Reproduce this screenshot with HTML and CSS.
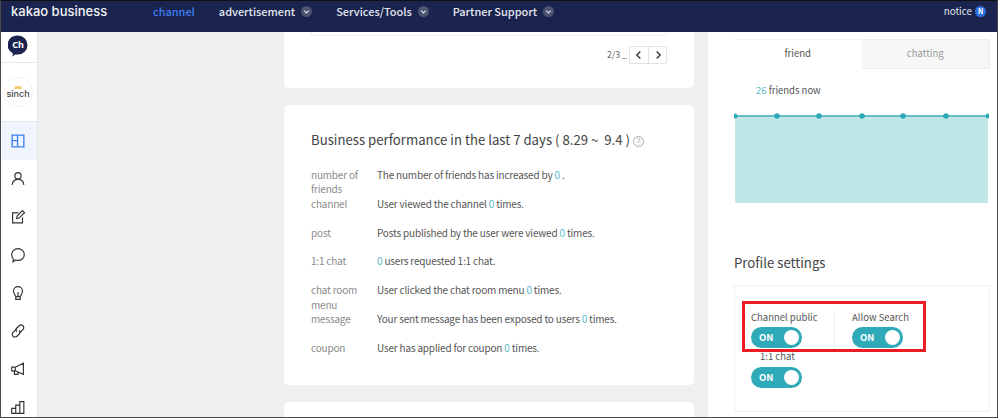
FILE: index.html
```html
<!DOCTYPE html>
<html lang="en">
<head>
<meta charset="utf-8">
<title>kakao business</title>
<link rel="stylesheet" href="styles.css">
</head>
<body>
<div class="frame">
  <header class="topbar">
    <div class="logo">kakao business</div>
    <nav class="nav">
      <span class="nav-item active">channel</span>
      <span class="nav-item">advertisement <i class="chev"><svg viewBox="0 0 12 12"><path d="M3.5 5l2.5 2.5L8.500 5"/></svg></i></span>
      <span class="nav-item">Services/Tools <i class="chev"><svg viewBox="0 0 12 12"><path d="M3.5 5l2.5 2.5L8.500 5"/></svg></i></span>
      <span class="nav-item">Partner Support <i class="chev"><svg viewBox="0 0 12 12"><path d="M3.5 5l2.5 2.5L8.500 5"/></svg></i></span>
    </nav>
    <div class="notice">notice <b class="badge">N</b></div>
  </header>
  <div class="body">
    <aside class="side">
      <div class="side-ch">
        <svg class="ch" viewBox="0 0 20 22"><path class="ch-b" d="M10 .5a9.500 9.500 0 0 1 0 19H7l-2.500 2.300.4-3.300A9.500 9.500 0 0 1 10 .5z"/><text x="10" y="13" class="ch-t">Ch</text></svg>
      </div>
      <div class="side-brand">
        <div class="brand-circle"><span class="brand-dot"></span><span class="brand-name">sinch</span></div>
      </div>
      <div class="menu active">
        <svg viewBox="0 0 20 20"><path d="M3.500 3.500h13v13h-13zM3.500 9.500h6M9.500 3.500v13"/></svg>
      </div>
      <div class="menu"><svg viewBox="0 0 20 20"><circle cx="10" cy="6.500" r="3.500"/><path d="M3.500 16.500c.5-4 3-6 6.500-6s6 2 6.500 6"/></svg></div>
      <div class="menu"><svg viewBox="0 0 20 20"><path d="M15 10.500v6H4V5.500h6.500"/><path d="M8.500 11.700l.5-2.700 6-6 2.200 2.200-6 6z"/></svg></div>
      <div class="menu"><svg viewBox="0 0 20 20"><path d="M10 3c4 0 7 2.800 7 6.500S14 16 10 16c-1 0-2-.2-2.800-.5L4.500 17.500l.3-3.200C3.700 13 3 11.400 3 9.500 3 5.800 6 3 10 3z"/></svg></div>
      <div class="menu"><svg viewBox="0 0 20 20"><path d="M7.500 14c0-1.500-2.500-2.500-2.500-6a5 5 0 0 1 10 0c0 3.500-2.500 4.500-2.500 6zM7.500 14v3h5v-3M10 9v5"/></svg></div>
      <div class="menu"><svg viewBox="0 0 20 20"><path d="M8.500 7.500l-4 4a3 3 0 0 0 4.300 4.300l2.500-2.500a3 3 0 0 0 0-4.300"/><path d="M11.500 12.500l4-4a3 3 0 0 0-4.300-4.300L8.700 6.700a3 3 0 0 0 0 4.300"/></svg></div>
      <div class="menu"><svg viewBox="0 0 20 20"><path d="M3 8h4l9-4.500v12.500l-9-4H3zM7 8v4M6 12v4h4v-2.700"/></svg></div>
      <div class="menu"><svg viewBox="0 0 20 20"><path d="M3 11.500h4.500v5.500H3zM7.500 8h4.500v9H7.500zM12 4h4.500v13H12z"/></svg></div>
    </aside>
    <main class="main">
      <div class="col-left">
        <section class="card card-top">
          <div class="slide-end"></div>
          <div class="pager">
            <span class="pager-count">2/3 _</span>
            <div class="pager-btns">
              <span class="pager-btn"><svg viewBox="0 0 18 18"><path d="M10.500 5L6.500 9l4 4"/></svg></span>
              <span class="pager-btn"><svg viewBox="0 0 18 18"><path d="M7.500 5l4 4-4 4"/></svg></span>
            </div>
          </div>
        </section>
        <section class="card card-perf">
          <h2 class="perf-title">Business performance in the last 7 days ( 8.29 ~&nbsp; 9.4 ) <i class="help">?</i></h2>
          <dl class="perf">
            <dt>number of friends</dt><dd>The number of friends has increased by <em>0</em> .</dd>
            <dt>channel</dt><dd>User viewed the channel <em>0</em> times.</dd>
            <dt>post</dt><dd>Posts published by the user were viewed <em>0</em> times.</dd>
            <dt>1:1 chat</dt><dd><em>0</em> users requested 1:1 chat.</dd>
            <dt>chat room menu</dt><dd>User clicked the chat room menu <em>0</em> times.</dd>
            <dt>message</dt><dd>Your sent message has been exposed to users <em>0</em> times.</dd>
            <dt>coupon</dt><dd>User has applied for coupon <em>0</em> times.</dd>
          </dl>
        </section>
        <section class="card card-next"></section>
      </div>
      <div class="col-right">
        <div class="stats">
          <div class="tabs">
            <span class="tab current">friend</span>
            <span class="tab">chatting</span>
          </div>
          <p class="friends"><em>26</em> friends now</p>
          <svg class="chart" viewBox="0 0 255 92" preserveAspectRatio="none">
            <rect class="area" x="1" y="6" width="253" height="86"/>
            <path class="line" d="M1 5H254"/>
            <circle cx="1" cy="5" r="2.500"/><circle cx="43" cy="5" r="2.800"/><circle cx="85" cy="5" r="2.800"/><circle cx="128" cy="5" r="2.800"/><circle cx="169" cy="5" r="2.800"/><circle cx="212" cy="5" r="2.800"/><circle cx="254" cy="5" r="2.500"/>
          </svg>
        </div>
        <h2 class="profile-title">Profile settings</h2>
        <div class="profile">
          <div class="setting-row">
            <div class="setting first">
              <div class="setting-label">Channel public</div>
              <div class="toggle"><span>ON</span><i></i></div>
            </div>
            <div class="setting second">
              <div class="setting-label">Allow Search</div>
              <div class="toggle"><span>ON</span><i></i></div>
            </div>
          </div>
          <div class="setting third">
            <div class="setting-label indent">1:1 chat</div>
            <div class="toggle"><span>ON</span><i></i></div>
          </div>
          <div class="highlight"></div>
        </div>
      </div>
    </main>
  </div>
</div>
</body>
</html>
```

FILE: styles.css
```css
* { box-sizing: border-box; }
html, body { margin: 0; height: 100%; }
body { font-family: "Noto Sans CJK KR", "Noto Sans", sans-serif; color: #555; background: #fff; overflow: hidden; }
.frame { width: 998px; height: 418px; display: flex; flex-direction: column; border: 1px solid #4a4a4a; border-top: 1px solid #111; overflow: hidden; }

.topbar { flex: 0 0 31px; background: #1a244f; color: #e4e6ee; display: flex; align-items: flex-start; padding: 0 11px 0 10px; }
.logo { width: 142px; font: 500 13px/20px "Inter", "Noto Sans", sans-serif; color: #f2f3f6; letter-spacing: 0; }
.nav { display: flex; flex: 1; font-size: 10.950px; line-height: 20px; font-weight: 500; }
.nav-item { margin-right: 24px; display: flex; align-items: center; gap: 6px; white-space: nowrap; }
.nav-item.active { color: #3f7ef0; margin-right: 24px; }
.chev { width: 11px; height: 11px; border-radius: 50%; background: #4d5470; display: block; }
.chev svg { display: block; width: 11px; height: 11px; fill: none; stroke: #e0e2ea; stroke-width: 1.200; }
.notice { font-size: 9.800px; line-height: 20px; display: flex; align-items: center; gap: 3px; }
.badge { width: 11px; height: 11px; border-radius: 50%; background: #2f6fe0; color: #fff; font-size: 7px; line-height: 11px; text-align: center; }

.body { flex: 1; display: flex; min-height: 0; }
.side { flex: 0 0 37px; background: #fff; border-right: 1px solid #e6e6e8; overflow: hidden; }
.side-ch { height: 31px; display: flex; justify-content: center; align-items: center; border-bottom: 1px solid #e9e9ec; padding: 0 2px 3px 0; }
.ch { width: 20px; height: 22px; }
.ch-b { fill: #1a244f; }
.ch-t { font-size: 9px; font-weight: 700; fill: #fff; text-anchor: middle; font-family: "Noto Sans", sans-serif; }
.side-brand { height: 59px; display: flex; align-items: center; justify-content: center; border-bottom: 1px solid #e9e9ec; padding-right: 2px; }
.brand-circle { width: 30px; height: 30px; border-radius: 50%; border: 1px solid #f4f4f4; display: flex; flex-direction: column; align-items: center; justify-content: center; }
.brand-dot { width: 8px; height: 3px; background: #f3cd6e; border-radius: 3px 3px 0 0; }
.brand-name { font: 500 9px/9px "Inter", sans-serif; color: #444; }
.menu { height: 38px; display: flex; align-items: center; justify-content: center; padding-right: 2px; }
.menu svg { width: 18px; height: 18px; fill: none; stroke: #333; stroke-width: 1.300; }
.menu.active { height: 38px; background: #f0f5fd; }
.menu.active svg { stroke: #3f7ef0; stroke-width: 1.500; }

.main { flex: 1; background: #eeeff1; display: flex; min-width: 0; padding-left: 246px; overflow: hidden; }
.col-left { flex: 0 0 410px; min-width: 0; display: flex; flex-direction: column; gap: 17px; }
.card { background: #fff; border-radius: 5px; flex: none; }
.card-top { height: 56px; padding: 0 27px; border-radius: 0 0 5px 5px; }
.slide-end { height: 4px; border: 1px solid #f0f0f0; border-top: 0; }
.pager { display: flex; justify-content: flex-end; align-items: center; gap: 2px; margin-top: 10px; }
.pager-count { font-size: 8.800px; line-height: 18px; color: #666; }
.pager-btns { display: flex; border: 1px solid #e2e2e4; border-radius: 2px; }
.pager-btn { width: 18px; height: 16px; display: block; }
.pager-btn + .pager-btn { border-left: 1px solid #e2e2e4; }
.pager-btn svg { display: block; width: 16px; height: 16px; fill: none; stroke: #333; stroke-width: 1.500; margin: 0 auto; }
.card-perf { height: 280px; padding: 24px 27px 0; }
.perf-title { margin: 0 0 17px; font-size: 13.200px; line-height: 22px; font-weight: 400; color: #444; white-space: nowrap; }
.help { display: inline-block; width: 11px; height: 11px; border: 1px solid #aaa; border-radius: 50%; font: 400 8px/9px "Noto Sans", sans-serif; color: #aaa; text-align: center; vertical-align: 0; }
.perf { margin: 0; display: grid; grid-template-columns: 66px 1fr; font-size: 10px; letter-spacing: -.19px; line-height: 14.400px; }
.perf dt { color: #8a8a8a; padding-bottom: 14.400px; }
.perf dd { margin: 0; color: #555; white-space: nowrap; }
.perf dt:nth-of-type(1), .perf dt:nth-of-type(5) { padding-bottom: 0; }
.perf em, .friends em { font-style: normal; color: #5cb9c8; }
.card-next { height: 60px; }

.col-right { flex: 0 0 289px; margin-left: 14px; background: #fff; padding: 7px 8px 0 26px; }
.stats { height: 164px; }
.tabs { display: flex; height: 30px; font-size: 9.600px; line-height: 27px; text-align: center; }
.tab { flex: 1; background: #f7f7f7; color: #999; border: 1px solid #ececec; border-left: 0; }
.tab.current { background: #fff; color: #555; border: 0; border-top: 1px solid #f2f2f2; }
.friends { margin: 14px 0 13px 22px; font-size: 9.500px; line-height: 15px; color: #555; }
.chart { display: block; width: 255px; height: 92px; }
.area { fill: #c0e6e8; }
.line { stroke: #35a9b5; stroke-width: 1.500; fill: none; }
.chart circle { fill: #2faab8; }
.profile-title { margin: 49px 0 11px; font-size: 13.200px; line-height: 22px; font-weight: 400; color: #444; }
.profile { position: relative; width: 256px; height: 127px; border: 1px solid #f1f1f1; padding: 24px 0 0 16px; }
.setting-row { display: flex; }
.setting { font-size: 9.500px; }
.setting.first { width: 83px; padding-bottom: 1px; }
.setting.second { border-left: 1px solid #eeeeee; padding-left: 17px; }
.setting-label { line-height: 14px; margin-bottom: 3px; color: #555; white-space: nowrap; }
.setting-label.indent { margin-left: 9px; margin-bottom: 4px; }
.third { margin-top: 0; }
.toggle { width: 51px; height: 21px; border-radius: 11px; background: #2faab8; display: flex; align-items: center; justify-content: space-between; padding: 0 3px 0 8px; }
.toggle span { color: #fff; font-size: 9.500px; font-weight: 700; line-height: 21px; }
.toggle i { width: 15px; height: 15px; border-radius: 50%; background: #fff; display: block; }
.highlight { position: absolute; left: 7px; top: 15px; width: 184px; height: 51px; border: 3px solid #ec1c24; }
```
